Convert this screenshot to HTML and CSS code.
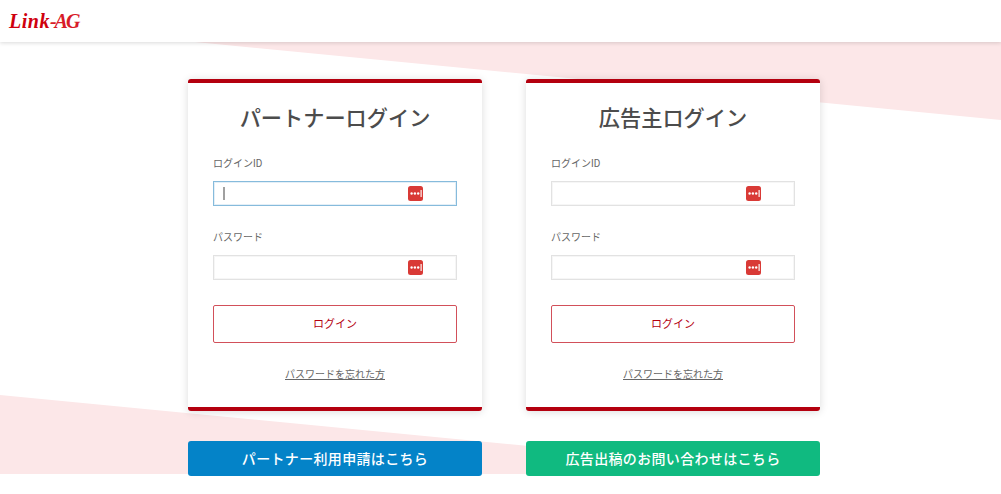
FILE: index.html
```html
<!DOCTYPE html>
<html lang="ja">
<head>
    <meta charset="UTF-8">
    <meta name="viewport" content="width=device-width, initial-scale=1.0">
    <title>Link-AG ログイン</title>
    <link rel="stylesheet" href="styles.css">
</head>
<body>

    <header class="site-header">
        <span class="logo">Link<span class="logo-sub">-AG</span></span>
    </header>

    <main class="login-page">
        <div class="shape shape-top"></div>
        <div class="shape shape-bottom"></div>

        <div class="login-grid">
            <section class="login-col">
                <form class="login-card">
                    <h2>パートナーログイン</h2>
                    <label class="field-label">ログインID</label>
                    <div class="field field-focus">
                        <span class="caret"></span>
                        <svg class="pw-icon" viewBox="0 0 15 15"><rect width="15" height="15" rx="2.5" fill="#d93a36"/><circle cx="3.6" cy="7.5" r="1.2" fill="#fff"/><circle cx="6.9" cy="7.5" r="1.2" fill="#fff"/><circle cx="10.2" cy="7.5" r="1.2" fill="#fff"/><rect x="12.4" y="4" width="1.5" height="7" fill="#f6cfcd"/></svg>
                    </div>
                    <label class="field-label">パスワード</label>
                    <div class="field">
                        <svg class="pw-icon" viewBox="0 0 15 15"><rect width="15" height="15" rx="2.5" fill="#d93a36"/><circle cx="3.6" cy="7.5" r="1.2" fill="#fff"/><circle cx="6.9" cy="7.5" r="1.2" fill="#fff"/><circle cx="10.2" cy="7.5" r="1.2" fill="#fff"/><rect x="12.4" y="4" width="1.5" height="7" fill="#f6cfcd"/></svg>
                    </div>
                    <button type="button" class="login-btn">ログイン</button>
                    <a class="forgot" href="#">パスワードを忘れた方</a>
                </form>
                <a class="cta cta-blue" href="#">パートナー利用申請はこちら</a>
            </section>

            <section class="login-col">
                <form class="login-card">
                    <h2>広告主ログイン</h2>
                    <label class="field-label">ログインID</label>
                    <div class="field">
                        <svg class="pw-icon" viewBox="0 0 15 15"><rect width="15" height="15" rx="2.5" fill="#d93a36"/><circle cx="3.6" cy="7.5" r="1.2" fill="#fff"/><circle cx="6.9" cy="7.5" r="1.2" fill="#fff"/><circle cx="10.2" cy="7.5" r="1.2" fill="#fff"/><rect x="12.4" y="4" width="1.5" height="7" fill="#f6cfcd"/></svg>
                    </div>
                    <label class="field-label">パスワード</label>
                    <div class="field">
                        <svg class="pw-icon" viewBox="0 0 15 15"><rect width="15" height="15" rx="2.5" fill="#d93a36"/><circle cx="3.6" cy="7.5" r="1.2" fill="#fff"/><circle cx="6.9" cy="7.5" r="1.2" fill="#fff"/><circle cx="10.2" cy="7.5" r="1.2" fill="#fff"/><rect x="12.4" y="4" width="1.5" height="7" fill="#f6cfcd"/></svg>
                    </div>
                    <button type="button" class="login-btn">ログイン</button>
                    <a class="forgot" href="#">パスワードを忘れた方</a>
                </form>
                <a class="cta cta-green" href="#">広告出稿のお問い合わせはこちら</a>
            </section>
        </div>
    </main>

</body>
</html>
```

FILE: styles.css
```css
html, body {
    margin: 0;
    padding: 0;
    height: 494px;
    overflow: hidden;
    background-color: white;
    color: #555;
    font-family: "Noto Sans CJK JP", "Noto Sans", sans-serif;
}

.site-header {
    position: relative;
    z-index: 2;
    height: 42px;
    padding-left: 9px;
    display: flex;
    align-items: center;
    background-color: white;
    box-shadow: 0 1px 4px rgba(0, 0, 0, 0.15);
}

.logo {
    font-family: "Liberation Serif", serif;
    font-size: 20px;
    font-weight: bold;
    font-style: italic;
    letter-spacing: 0.5px;
    color: #cf000e;
}

.logo-sub {
    letter-spacing: -2px;
    color: #d81c28;
}

.login-page {
    position: relative;
    height: 452px;
}

.shape {
    position: absolute;
    left: 0;
    background-color: #fce7e8;
}

.shape-top {
    top: 0;
    width: 1001px;
    height: 78px;
    clip-path: polygon(195px 0, 100% 0, 100% 100%);
}

.shape-bottom {
    top: 353px;
    width: 820px;
    height: 79px;
    clip-path: polygon(0 0, 100% 100%, 0 100%);
}

.login-grid {
    position: relative;
    display: flex;
    justify-content: center;
    gap: 44px;
    padding: 37px 0 0 7px;
}

.login-col {
    width: 294px;
}

.login-card {
    display: flex;
    flex-direction: column;
    box-sizing: border-box;
    height: 332px;
    padding: 0 25px;
    background-color: white;
    border-top: 4px solid #b4000f;
    border-bottom: 4px solid #b4000f;
    border-radius: 3px;
    box-shadow: 0 1px 8px rgba(0, 0, 0, 0.14);
}

.login-card h2 {
    margin: 18px 0 22px;
    font-size: 21.2px;
    line-height: 32px;
    font-weight: 500;
    text-align: center;
    color: #4c4c4c;
}

.field-label {
    height: 16px;
    font-family: Roboto, "Noto Sans CJK JP", sans-serif;
    font-size: 10px;
    line-height: 18px;
    color: #666;
}

.field {
    display: flex;
    align-items: center;
    box-sizing: border-box;
    height: 25px;
    margin: 10px 0 23px;
    padding: 0 33px 0 9px;
    background-color: white;
    border: 1px solid #e2e2e2;
    outline: 1px solid #f6f6f6;
    outline-offset: -2px;
}

.field-focus {
    border-color: #86bbdc;
    outline-color: #e4eff7;
}

.caret {
    width: 2px;
    height: 13px;
    background-color: #a0a0a0;
}

.pw-icon {
    width: 15px;
    height: 15px;
    margin-left: auto;
}

.login-btn {
    height: 38px;
    margin-top: 2px;
    padding: 0 0 2px;
    font-family: inherit;
    font-size: 11px;
    color: #b4000f;
    background-color: white;
    border: 1px solid #d2505a;
    border-radius: 2px;
}

.forgot {
    margin-top: 23px;
    font-size: 10px;
    line-height: 16px;
    text-align: center;
    color: #666;
    text-decoration: underline;
}

.cta {
    display: block;
    height: 35px;
    margin-top: 30px;
    font-size: 14px;
    font-weight: 500;
    line-height: 34px;
    letter-spacing: 0.33px;
    text-align: center;
    text-decoration: none;
    color: white;
    border-radius: 3px;
}

.cta-blue {
    background-color: #0483c8;
}

.cta-green {
    background-color: #10ba80;
}
```
